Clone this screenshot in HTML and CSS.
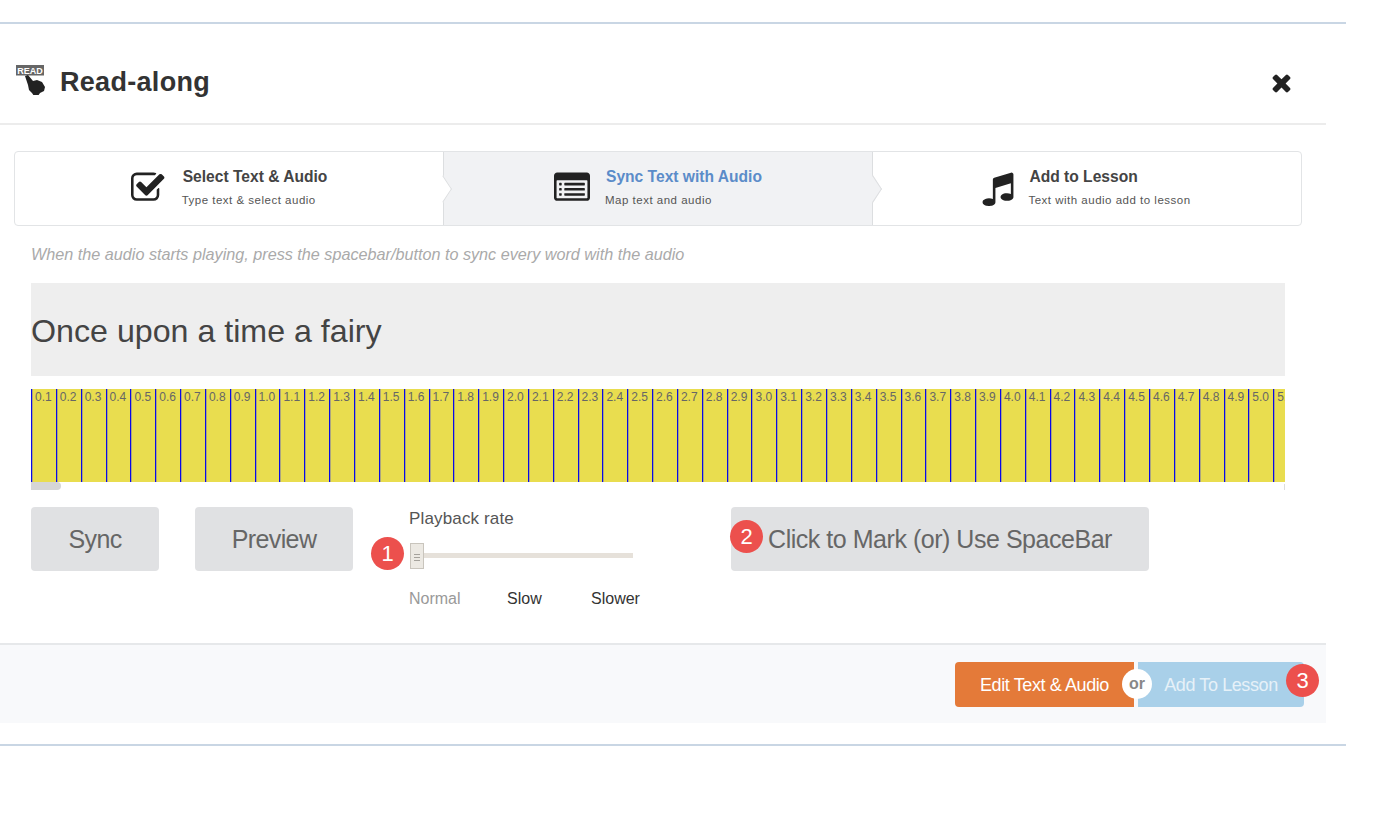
FILE: index.html
```html
<!DOCTYPE html>
<html lang="en">
<head>
    <meta charset="UTF-8">
    <title>Read-along</title>
    <link rel="stylesheet" href="styles.css">
</head>
<body>
<main class="frame">
    <div class="modal">
        <header class="modal-head">
            <svg class="read-icon" viewBox="0 0 30 30" width="30" height="30">
                <rect x="0" y="0" width="28" height="10.5" fill="#666"/>
                <text x="14" y="8.6" class="read-label">READ</text>
                <path d="M9 11l3-1 5 6 4-1 5 2 3 5-1 4-4 2-2 3h-4l-2-3-3-3-1-5z" fill="#222"/>
            </svg>
            <h1 class="modal-title">Read-along</h1>
            <svg class="close-icon" viewBox="0 0 1792 1792" width="27" height="27"><path d="M1490 1322q0 40-28 68l-136 136q-28 28-68 28t-68-28l-294-294-294 294q-28 28-68 28t-68-28l-136-136q-28-28-28-68t28-68l294-294-294-294q-28-28-28-68t28-68l136-136q28-28 68-28t68 28l294 294 294-294q28-28 68-28t68 28l136 136q28 28 28 68t-28 68l-294 294 294 294q28 28 28 68z"/></svg>
        </header>

        <section class="steps">
            <div class="step">
                <svg class="step-icon" viewBox="0 0 1792 1792"><path d="M1408 930v318q0 119-84.5 203.5t-203.5 84.5h-832q-119 0-203.5-84.5t-84.5-203.5v-832q0-119 84.5-203.5t203.5-84.5h832q63 0 117 25 15 7 18 23 3 17-9 29l-49 49q-10 10-23 10-3 0-9-2-23-6-45-6h-832q-66 0-113 47t-47 113v832q0 66 47 113t113 47h832q66 0 113-47t47-113v-254q0-13 9-22l64-64q10-10 23-10 6 0 12 3 20 8 20 29zm231-489l-814 814q-24 24-57 24t-57-24l-430-430q-24-24-24-57t24-57l110-110q24-24 57-24t57 24l263 263 647-647q24-24 57-24t57 24l110 110q24 24 24 57t-24 57z"/></svg>
                <div class="step-text">
                    <div class="step-title">Select Text &amp; Audio</div>
                    <div class="step-sub">Type text &amp; select audio</div>
                </div>
            </div>
            <div class="step step-active">
                <svg class="step-icon" viewBox="0 0 1792 1792"><path d="M384 1184v64q0 13-9.5 22.5t-22.5 9.5h-64q-13 0-22.5-9.5t-9.5-22.5v-64q0-13 9.5-22.5t22.5-9.5h64q13 0 22.5 9.5t9.5 22.5zm0-256v64q0 13-9.5 22.5t-22.5 9.5h-64q-13 0-22.5-9.5t-9.5-22.5v-64q0-13 9.5-22.5t22.5-9.5h64q13 0 22.5 9.5t9.5 22.5zm0-256v64q0 13-9.5 22.5t-22.5 9.5h-64q-13 0-22.5-9.5t-9.5-22.5v-64q0-13 9.5-22.5t22.5-9.5h64q13 0 22.5 9.5t9.5 22.5zm1152 512v64q0 13-9.5 22.5t-22.5 9.5h-960q-13 0-22.5-9.5t-9.5-22.5v-64q0-13 9.5-22.5t22.5-9.5h960q13 0 22.5 9.5t9.5 22.5zm0-256v64q0 13-9.5 22.5t-22.5 9.5h-960q-13 0-22.5-9.5t-9.5-22.5v-64q0-13 9.5-22.5t22.5-9.5h960q13 0 22.5 9.5t9.5 22.5zm0-256v64q0 13-9.5 22.5t-22.5 9.5h-960q-13 0-22.5-9.5t-9.5-22.5v-64q0-13 9.5-22.5t22.5-9.5h960q13 0 22.5 9.5t9.5 22.5zm128 704v-832q0-13-9.5-22.5t-22.5-9.5h-1472q-13 0-22.5 9.5t-9.5 22.5v832q0 13 9.5 22.5t22.5 9.5h1472q13 0 22.5-9.5t9.5-22.5zm128-1088v1088q0 66-47 113t-113 47h-1472q-66 0-113-47t-47-113v-1088q0-66 47-113t113-47h1472q66 0 113 47t47 113z"/></svg>
                <div class="step-text">
                    <div class="step-title">Sync Text with Audio</div>
                    <div class="step-sub">Map text and audio</div>
                </div>
            </div>
            <div class="step step-last">
                <svg class="step-icon" viewBox="0 0 1792 1792"><path d="M1664 224v1120q0 50-34 89t-86 60.5-103.5 32-96.5 10.5-96.5-10.5-103.5-32-86-60.5-34-89 34-89 86-60.5 103.5-32 96.5-10.5q105 0 192 39v-537l-768 237v709q0 50-34 89t-86 60.5-103.5 32-96.5 10.5-96.5-10.5-103.5-32-86-60.5-34-89 34-89 86-60.5 103.5-32 96.5-10.5q105 0 192 39v-967q0-31 19-56.5t49-35.5l832-256q12-4 28-4 40 0 68 28t28 68z"/></svg>
                <div class="step-text">
                    <div class="step-title">Add to Lesson</div>
                    <div class="step-sub">Text with audio add to lesson</div>
                </div>
            </div>
        </section>

        <div class="workarea">
            <p class="hint">When the audio starts playing, press the spacebar/button to sync every word with the audio</p>
            <div class="sentence">Once upon a time a fairy</div>

            <div class="timeline">
                <div class="ticks">
                    <span>0.1</span><span>0.2</span><span>0.3</span><span>0.4</span><span>0.5</span><span>0.6</span><span>0.7</span><span>0.8</span><span>0.9</span><span>1.0</span>
                    <span>1.1</span><span>1.2</span><span>1.3</span><span>1.4</span><span>1.5</span><span>1.6</span><span>1.7</span><span>1.8</span><span>1.9</span><span>2.0</span>
                    <span>2.1</span><span>2.2</span><span>2.3</span><span>2.4</span><span>2.5</span><span>2.6</span><span>2.7</span><span>2.8</span><span>2.9</span><span>3.0</span>
                    <span>3.1</span><span>3.2</span><span>3.3</span><span>3.4</span><span>3.5</span><span>3.6</span><span>3.7</span><span>3.8</span><span>3.9</span><span>4.0</span>
                    <span>4.1</span><span>4.2</span><span>4.3</span><span>4.4</span><span>4.5</span><span>4.6</span><span>4.7</span><span>4.8</span><span>4.9</span><span>5.0</span>
                    <span>5.1</span>
                </div>
                <div class="scrollbar"><div class="scroll-thumb"></div><div class="scroll-end"></div></div>
            </div>

            <div class="controls">
                <button class="btn btn-sync">Sync</button>
                <button class="btn btn-preview">Preview</button>
                <div class="rate">
                    <div class="rate-label">Playback rate</div>
                    <div class="slider">
                        <span class="badge badge-one">1</span>
                        <div class="slider-handle"></div>
                        <div class="slider-track"></div>
                    </div>
                    <div class="rate-options">
                        <span class="rate-current">Normal</span>
                        <span class="rate-slow">Slow</span>
                        <span class="rate-slower">Slower</span>
                    </div>
                </div>
                <button class="btn btn-mark"><span class="badge badge-two">2</span>Click to Mark (or) Use SpaceBar</button>
            </div>
        </div>

        <footer class="modal-foot">
            <div class="foot-actions">
                <button class="foot-btn foot-edit">Edit Text &amp; Audio</button>
                <span class="or">or</span>
                <button class="foot-btn foot-add">Add To Lesson<span class="badge badge-three">3</span></button>
            </div>
        </footer>
    </div>
</main>
</body>
</html>
```

FILE: styles.css
```css
body {
    margin: 0;
    font-family: "Liberation Sans", Arial, sans-serif;
    background: #fff;
    color: #333;
}

.frame {
    width: 1346px;
    height: 720px;
    margin-top: 22px;
    border-top: 2px solid #c9d6e4;
    border-bottom: 2px solid #c9d6e4;
}

.modal {
    width: 1326px;
}

.modal-head {
    height: 81px;
    display: flex;
    align-items: center;
    border-bottom: 2px solid #ececec;
    padding: 18px 31px 0 16px;
    position: relative;
}

.read-icon {
    position: absolute;
    left: 16px;
    top: 41px;
}

.read-label {
    font-size: 9px;
    font-weight: bold;
    fill: #fff;
    text-anchor: middle;
}

.modal-title {
    margin: 0 0 0 44px;
    font-size: 27px;
    font-weight: bold;
    color: #333;
    letter-spacing: 0.3px;
    flex: 1;
}

.close-icon {
    fill: #222;
}

/* wizard steps */
.steps {
    display: flex;
    width: 1288px;
    height: 75px;
    margin: 26px 0 0 14px;
    box-sizing: border-box;
    border: 1px solid #e2e4e6;
    border-radius: 4px;
}

.step {
    flex: 1;
    display: flex;
    align-items: center;
    justify-content: center;
    gap: 16px;
    position: relative;
}

.step-last {
    gap: 13px;
}

.step-active {
    background: #f1f2f4;
    border-left: 1px solid #dcdee0;
    border-right: 1px solid #dcdee0;
}

.step-active::before,
.step-active::after {
    content: "";
    position: absolute;
    top: 29px;
    width: 15px;
    height: 15px;
    transform: rotate(45deg) skew(12deg, 12deg);
    border-top: 1px solid #dcdee0;
    border-right: 1px solid #dcdee0;
}

.step-active::before {
    left: -9px;
    background: #fff;
}

.step-active::after {
    right: -9px;
    background: #f1f2f4;
    z-index: 1;
}

.step-icon {
    width: 36px;
    height: 36px;
    fill: #222;
    margin-top: -1px;
}

.step-last .step-icon {
    margin-left: -3px;
}

.step-text {
    margin-top: -4px;
}

.step-title {
    font-size: 15.6px;
    font-weight: bold;
    color: #444;
    margin-bottom: 8px;
}

.step-active .step-title {
    color: #5b8cc9;
}

.step-sub {
    font-size: 11.5px;
    letter-spacing: 0.5px;
    color: #555;
    margin-left: -1px;
}

/* work area */
.workarea {
    padding: 0 41px 0 31px;
    height: 417px;
}

.hint {
    margin: 0;
    padding-top: 20px;
    height: 37px;
    font-size: 16.2px;
    line-height: 17px;
    font-style: italic;
    color: #aaa;
}

.sentence {
    height: 93px;
    padding-top: 30px;
    box-sizing: border-box;
    background: #eee;
    font-size: 32.2px;
    line-height: 36px;
    color: #444;
}

.timeline {
    margin-top: 13px;
    overflow: hidden;
}

.ticks {
    display: flex;
    height: 93px;
    background: #e9dd4f;
    overflow: hidden;
}

.ticks span {
    flex: 0 0 24.85px;
    box-sizing: border-box;
    border-left: 1px solid #0a0ae6;
    box-shadow: inset 1px 0 0 rgba(60, 60, 220, 0.35);
    padding: 2px 0 0 3px;
    font-size: 12px;
    line-height: 13px;
    color: #666;
}

.scrollbar {
    height: 8px;
    display: flex;
    justify-content: space-between;
}

.scroll-thumb {
    width: 30px;
    height: 8px;
    background: #d6d6d6;
    border-radius: 0 4px 4px 0;
}

.scroll-end {
    width: 1px;
    height: 6px;
    margin-top: 2px;
    background: #ddd;
}

.controls {
    display: flex;
    align-items: flex-start;
    margin-top: 17px;
}

.btn {
    height: 64px;
    border: 0;
    border-radius: 4px;
    background: #e0e1e3;
    color: #666;
    font-family: inherit;
    font-size: 25px;
    letter-spacing: -0.6px;
    padding: 0;
    position: relative;
}

.btn-sync {
    width: 128px;
}

.btn-preview {
    width: 158px;
    margin-left: 36px;
}

.btn-mark {
    width: 418px;
    margin-left: 90px;
    letter-spacing: -0.47px;
}

.rate {
    width: 232px;
    margin-left: 56px;
    font-size: 16px;
}

.rate-label {
    color: #555;
    font-size: 17px;
    letter-spacing: 0.15px;
    line-height: 22px;
    padding-top: 1px;
    margin-bottom: 13px;
}

.slider {
    display: flex;
    align-items: center;
    position: relative;
    height: 26px;
    margin-left: 1px;
}

.slider-handle {
    width: 12px;
    height: 24px;
    border: 1px solid #c9c5bd;
    background: repeating-linear-gradient(#ece9e3 0, #ece9e3 2px, #a5a29c 2px, #a5a29c 3px) center / 6px 9px no-repeat, #ece9e3;
}

.slider-track {
    width: 209px;
    height: 5px;
    margin-top: -2px;
    background: #e6e1da;
}

.rate-options {
    margin-top: 20px;
    line-height: 20px;
    display: flex;
    color: #333;
}

.rate-current {
    width: 98px;
    color: #999;
}

.rate-slow {
    width: 84px;
}

.badge {
    position: absolute;
    width: 33px;
    height: 33px;
    border-radius: 50%;
    background: #ec504d;
    color: #fff;
    font-size: 22px;
    line-height: 33px;
    text-align: center;
    letter-spacing: 0;
}

.badge-one {
    left: -39px;
    top: -6px;
}

.badge-two {
    left: -1px;
    top: 13px;
}

.badge-three {
    right: -15px;
    top: 2px;
}

/* footer */
.modal-foot {
    height: 78px;
    border-top: 2px solid #e6e8ea;
    background: #f8f9fb;
    display: flex;
    justify-content: flex-end;
    padding-right: 22px;
}

.foot-actions {
    display: flex;
    margin-top: 17px;
    height: 45px;
    position: relative;
    gap: 4px;
}

.foot-btn {
    height: 45px;
    border: 0;
    font-family: inherit;
    font-size: 18px;
    letter-spacing: -0.4px;
    color: #fff;
    position: relative;
    padding: 1px 0 0;
}

.foot-edit {
    width: 179px;
    background: #e47a39;
    border-radius: 4px 0 0 4px;
}

.foot-add {
    width: 166px;
    background: #a9d0e9;
    border-radius: 0 4px 4px 0;
    color: #e6f1f8;
}

.or {
    position: absolute;
    left: 167px;
    top: 7px;
    width: 30px;
    height: 30px;
    border-radius: 50%;
    background: #fff;
    color: #888;
    font-size: 16px;
    font-weight: bold;
    line-height: 29px;
    text-align: center;
    z-index: 1;
}
```
